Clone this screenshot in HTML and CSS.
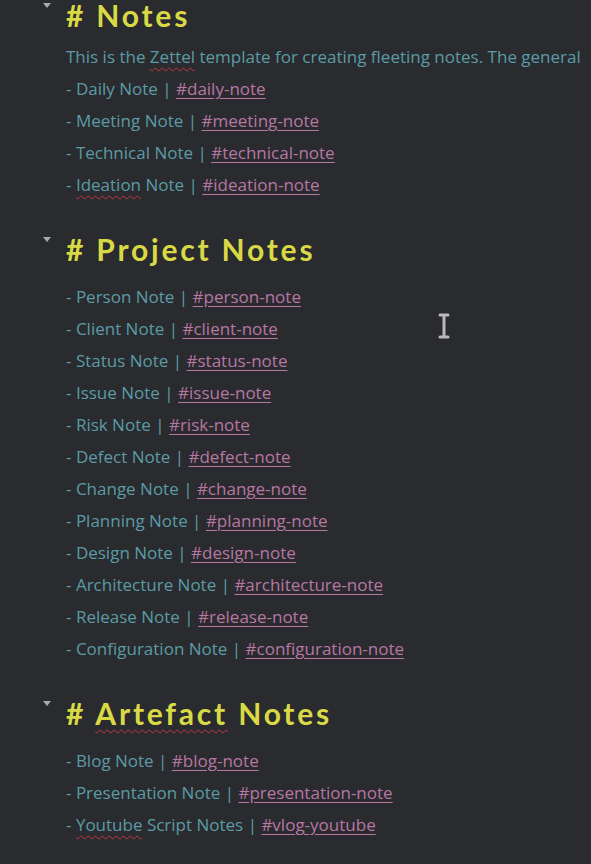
FILE: index.html
```html
<!DOCTYPE html>
<html>
<head>
<meta charset="utf-8">
<link rel="stylesheet" href="styles.css">
</head>
<body>
<div class="page">
  <section class="section first">
    <h1 class="heading"><span class="fold"></span># Notes</h1>
    <p class="line desc">This is the <span class="misspelt">Zettel</span> template for creating fleeting notes. The general</p>
    <p class="line">- Daily Note | <span class="tag">#daily-note</span></p>
    <p class="line">- Meeting Note | <span class="tag">#meeting-note</span></p>
    <p class="line">- Technical Note | <span class="tag">#technical-note</span></p>
    <p class="line">- <span class="misspelt">Ideation</span> Note | <span class="tag">#ideation-note</span></p>
  </section>
  <section class="section">
    <h1 class="heading"><span class="fold"></span># Project Notes</h1>
    <p class="line">- Person Note | <span class="tag">#person-note</span></p>
    <p class="line">- Client Note | <span class="tag">#client-note</span></p>
    <p class="line">- Status Note | <span class="tag">#status-note</span></p>
    <p class="line">- Issue Note | <span class="tag">#issue-note</span></p>
    <p class="line">- Risk Note | <span class="tag">#risk-note</span></p>
    <p class="line">- Defect Note | <span class="tag">#defect-note</span></p>
    <p class="line">- Change Note | <span class="tag">#change-note</span></p>
    <p class="line">- Planning Note | <span class="tag">#planning-note</span></p>
    <p class="line">- Design Note | <span class="tag">#design-note</span></p>
    <p class="line">- Architecture Note | <span class="tag">#architecture-note</span></p>
    <p class="line">- Release Note | <span class="tag">#release-note</span></p>
    <p class="line">- Configuration Note | <span class="tag">#configuration-note</span></p>
  </section>
  <section class="section">
    <h1 class="heading"><span class="fold"></span># <span class="misspelt">Artefact</span> Notes</h1>
    <p class="line">- Blog Note | <span class="tag">#blog-note</span></p>
    <p class="line">- Presentation Note | <span class="tag">#presentation-note</span></p>
    <p class="line">- <span class="misspelt">Youtube</span> Script Notes | <span class="tag">#vlog-youtube</span></p>
  </section>
  <svg class="cursor" width="12" height="26" viewBox="0 0 12 26">
    <path d="M2 2h8M6 2v22M2 24h8" stroke="#b9b9bb" stroke-width="3" fill="none" stroke-linecap="round"/>
  </svg>
</div>
</body>
</html>
```
FILE: styles.css
```css
html, body {
  margin: 0;
  padding: 0;
  background: #2a2b2f;
}
body {
  width: 591px;
  height: 864px;
  overflow: hidden;
  font-family: "Open Sans", Lato, sans-serif;
}
.page {
  position: relative;
  margin-top: -5px;
  padding-left: 66px;
  white-space: nowrap;
  overflow: hidden;
}
.section {
  margin-bottom: 28px;
}
.heading {
  position: relative;
  margin: 0 0 12px 0;
  font-family: Lato, "Open Sans", sans-serif;
  font-size: 30px;
  line-height: 40px;
  font-weight: 700;
  letter-spacing: 2.8px;
  color: #d9d945;
}
.first .heading {
  margin-bottom: 6px;
}
.fold {
  position: absolute;
  left: -23px;
  top: 8px;
  width: 0;
  height: 0;
  border-left: 4px solid transparent;
  border-right: 4px solid transparent;
  border-top: 5px solid #a9aaad;
}
.line {
  margin: 0;
  font-size: 17px;
  letter-spacing: 0;
  line-height: 32px;
  color: #5b9ba5;
}
.tag {
  color: #b777a3;
  text-decoration: underline;
  text-underline-offset: 3px;
}
.misspelt {
  text-decoration: underline wavy #c0393c;
  text-decoration-thickness: 1px;
  text-underline-offset: 4px;
}
.cursor {
  position: absolute;
  left: 438px;
  top: 318px;
}
```
